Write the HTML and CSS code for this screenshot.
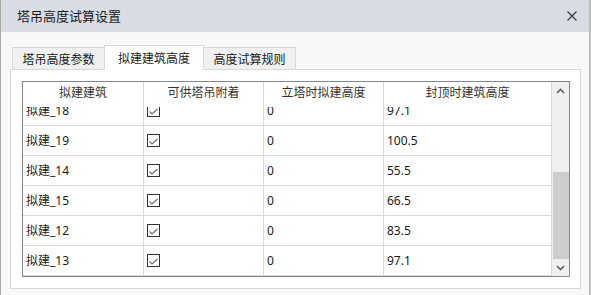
FILE: index.html
```html
<!DOCTYPE html>
<html lang="zh-CN">

<head>
    <meta charset="UTF-8">
    <title>塔吊高度试算设置</title>
    <link rel="stylesheet" href="styles.css">
</head>

<body>
    <div class="window">
        <div class="titlebar">
            <span class="title">塔吊高度试算设置</span>
            <a href="javascript:;" class="close">
                <svg width="10" height="10" viewBox="0 0 10 10">
                    <path d="M0.5 0.5 L9.5 9.5 M9.5 0.5 L0.5 9.5" stroke="#333" stroke-width="1.1" fill="none"/>
                </svg>
            </a>
        </div>
        <div class="content">
            <ul class="tabs">
                <li class="tab tab1">塔吊高度参数</li>
                <li class="tab active">拟建建筑高度</li>
                <li class="tab tab3">高度试算规则</li>
            </ul>
            <div class="panel">
                <div class="grid">
                    <div class="grid-main">
                        <div class="row head">
                            <div class="cell c1">拟建建筑</div>
                            <div class="cell c2">可供塔吊附着</div>
                            <div class="cell c3">立塔时拟建高度</div>
                            <div class="cell c4">封顶时建筑高度</div>
                        </div>
                        <div class="viewport">
                            <div class="rows" id="rows"></div>
                        </div>
                    </div>
                    <div class="scrollbar">
                        <div class="sb-btn">
                            <svg width="9" height="6" viewBox="0 0 9 6">
                                <path d="M1 5 L4.5 1.5 L8 5" stroke="#606060" stroke-width="1.6" fill="none"/>
                            </svg>
                        </div>
                        <div class="sb-track">
                            <div class="sb-thumb"></div>
                        </div>
                        <div class="sb-btn">
                            <svg width="9" height="6" viewBox="0 0 9 6">
                                <path d="M1 1 L4.5 4.5 L8 1" stroke="#606060" stroke-width="1.6" fill="none"/>
                            </svg>
                        </div>
                    </div>
                </div>
            </div>
        </div>
    </div>
    <script>
        // 表格数据
        var data = [
            ["拟建_18", "0", "97.1"],
            ["拟建_19", "0", "100.5"],
            ["拟建_14", "0", "55.5"],
            ["拟建_15", "0", "66.5"],
            ["拟建_12", "0", "83.5"],
            ["拟建_13", "0", "97.1"]
        ];
        var check = '<svg class="chk" width="13" height="13" viewBox="0 0 13 13">' +
            '<rect x="0.5" y="0.5" width="12" height="12" fill="#fff" stroke="#333"/>' +
            '<path d="M2.5 7.5 L5 10 L10.5 5" stroke="#6a6a6a" stroke-width="1.1" fill="none"/></svg>';
        var rows = document.getElementById("rows");
        var html = "";
        for (var i = 0; i < data.length; i++) {
            html += '<div class="row">' +
                '<div class="cell c1">' + data[i][0] + '</div>' +
                '<div class="cell c2">' + check + '</div>' +
                '<div class="cell c3">' + data[i][1] + '</div>' +
                '<div class="cell c4">' + data[i][2] + '</div>' +
                '</div>';
        }
        rows.innerHTML = html;
    </script>
</body>

</html>
```

FILE: styles.css
```css
* {
    margin: 0;
    padding: 0;
    box-sizing: border-box;
}

body {
    background-color: #f7f7f7;
    font-family: "Noto Sans", "Noto Sans CJK SC", sans-serif;
    font-size: 12px;
    color: #1a1a1a;
}

.window {
    height: 295px;
    border-left: 1px solid #a8a8a8;
    border-right: 2px solid #bdbdbd;
    background-color: #f8f8f8;
}

.titlebar {
    height: 32px;
    background-color: #d9dde3;
    display: flex;
    align-items: center;
    justify-content: space-between;
    padding: 0 11px 0 16px;
}

.title {
    font-family: "Noto Sans CJK SC", sans-serif;
    font-size: 13px;
    line-height: 16px;
}

.close {
    display: flex;
    width: 11px;
    height: 11px;
    margin-top: 1px;
}

.content {
    padding: 13px 8px 0 9px;
}

.tabs {
    list-style: none;
    display: flex;
    align-items: flex-end;
    height: 24px;
    padding-left: 2px;
}

.tab {
    height: 22px;
    width: 93px;
    border: 1px solid #d9d9d9;
    border-bottom: none;
    background-color: #f0f0f0;
    display: flex;
    align-items: center;
    justify-content: center;
    font-family: "Noto Sans CJK SC", sans-serif;
    font-size: 12px;
    line-height: 14px;
    color: #1a1a1a;
}

.tab.active {
    width: 100px;
    height: 25px;
    margin-left: -1px;
    margin-bottom: -1px;
    background-color: #fff;
    position: relative;
    z-index: 1;
}

.tab.tab3 {
    margin-left: -1px;
}

.panel {
    height: 220px;
    border: 1px solid #d9d9d9;
    background-color: #fff;
    padding: 11px 10px 11px 11px;
}

.grid {
    width: 548px;
    height: 196px;
    border: 1px solid #828790;
    display: flex;
}

.grid-main {
    width: 529px;
    display: flex;
    flex-direction: column;
}

.row {
    display: flex;
    height: 30px;
    border-bottom: 1px solid #d9d9d9;
}

.row.head {
    height: 25px;
    border-bottom: none;
    background-color: #fff;
    color: #333;
}

.row.head .cell {
    justify-content: center;
    padding-left: 0;
    padding-bottom: 3px;
}

.cell {
    display: flex;
    align-items: center;
    padding-left: 3px;
    border-right: 1px solid #d9d9d9;
    line-height: 14px;
    white-space: nowrap;
}

.c1 {
    width: 121px;
}

.c2,
.c3 {
    width: 120px;
}

.c4 {
    width: 168px;
}

.chk {
    display: block;
}

.viewport {
    height: 169px;
    overflow: hidden;
}

/* 已经向下滚动了一点 */
.rows {
    margin-top: -11px;
}

.scrollbar {
    width: 17px;
    background-color: #f0f0f0;
    display: flex;
    flex-direction: column;
}

.sb-btn {
    height: 17px;
    display: flex;
    align-items: center;
    justify-content: center;
}

.sb-track {
    flex: 1;
    display: flex;
    flex-direction: column;
    justify-content: flex-end;
}

.sb-thumb {
    height: 87px;
    margin: 0 0 0 1px;
    background-color: #cdcdcd;
}
```
